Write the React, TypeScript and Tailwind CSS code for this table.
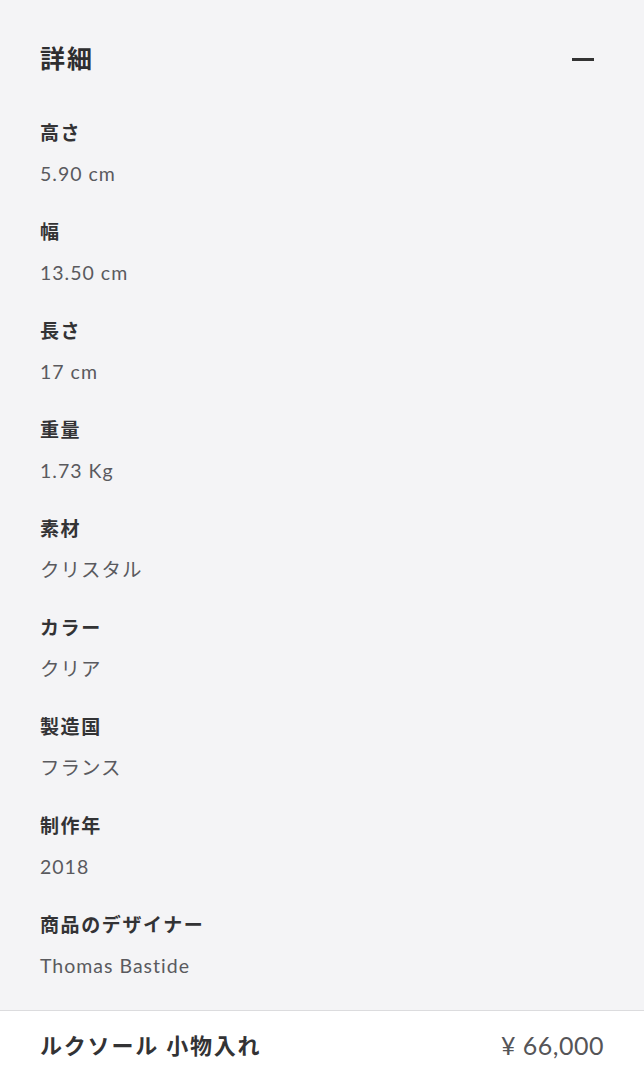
import React from "react";

const rows: [string, string][] = [
  ["高さ", "5.90 cm"],
  ["幅", "13.50 cm"],
  ["長さ", "17 cm"],
  ["重量", "1.73 Kg"],
  ["素材", "クリスタル"],
  ["カラー", "クリア"],
  ["製造国", "フランス"],
  ["制作年", "2018"],
  ["商品のデザイナー", "Thomas Bastide"],
];

export default function App() {
  return (
    <div
      className="w-[644px] h-[1080px] overflow-hidden bg-white flex flex-col"
      style={{ fontFamily: 'Lato, "Noto Sans CJK JP", sans-serif' }}
    >
      <div className="bg-[#f4f4f6] px-10 pt-[42px] pb-[30px] border-b border-[#dcdcde]">
        <div className="flex items-center justify-between h-8">
          <h2 className="text-[25px] leading-8 font-bold text-[#2e2e30] tracking-[2px]">詳細</h2>
          <span className="block w-[22px] h-[2.5px] bg-[#333] mr-[10px] mt-[3px]" />
        </div>
        <div className="mt-[45px] flex flex-col gap-[30px]">
          {rows.map(([k, v]) => (
            <div key={k} className="flex flex-col gap-[13px]">
              <div className="text-[19px] leading-7 font-bold text-[#333335] tracking-[1.6px]">{k}</div>
              <div className="text-[19.5px] leading-7 text-[#5a5a5e] tracking-[1px]">{v}</div>
            </div>
          ))}
        </div>
      </div>
      <div className="flex items-center justify-between px-10 h-[70px]">
        <div className="text-[22px] font-bold text-[#333335] tracking-[1.8px]">ルクソール 小物入れ</div>
        <div className="text-[25px] text-[#555558] tracking-[0.5px]">¥ 66,000</div>
      </div>
    </div>
  );
}
